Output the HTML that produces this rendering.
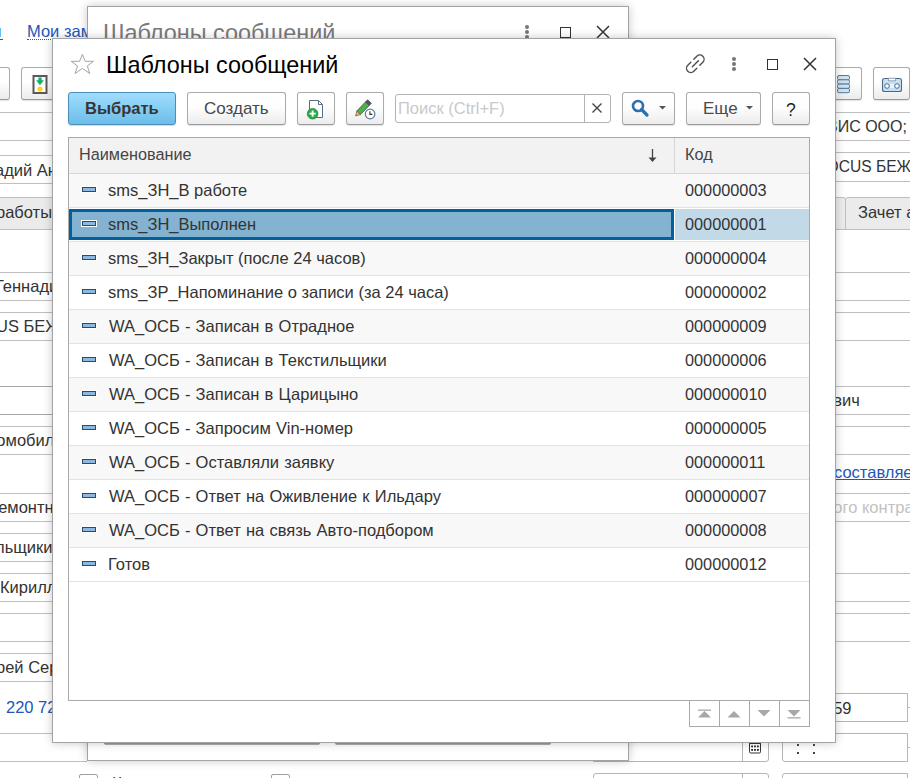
<!DOCTYPE html>
<html><head><meta charset="utf-8">
<style>
*{box-sizing:border-box;margin:0;padding:0}
html,body{width:910px;height:778px;overflow:hidden;background:#fff;font-family:"Liberation Sans",sans-serif;color:#333}
.a{position:absolute}
.hl{position:absolute;height:1px;background:#bfbfbf}
.t{position:absolute;white-space:nowrap;line-height:20px;font-size:16.25px;color:#333}
.btn{position:absolute;border:1px solid #ababab;border-bottom-color:#9a9a9a;border-radius:3px;background:linear-gradient(#fff 0%,#fefefe 45%,#ececec 100%);box-shadow:0 1px 1px rgba(0,0,0,.12)}
.dot{width:4px;height:4px;border-radius:50%;background:#777}
.bbl{border:1px solid #4b8cb8;border-radius:3px;background:linear-gradient(#a0ddfd,#6cbdea);box-shadow:0 1px 1px rgba(0,0,0,.15)}
.sel{border:3px solid #04609d;background:#84b3d1}
.r,.bg{font-size:16.5px}
.rs{background:#e3e3e3}
.ic{width:14px;height:5px;border:1px solid #234d74;background:#8cb9df;box-shadow:0 0 0 1px #fff}
.win{position:absolute;background:#fff;border:1px solid #a3a3a3;box-shadow:0 0 9px rgba(0,0,0,.22)}
</style></head><body>

<!-- ============ BACKGROUND FORM ============ -->
<div class="t" style="left:-17px;top:21px;font-size:16.5px;color:#2456b8">ии</div>
<div class="a" style="left:0px;top:39px;width:2px;border-top:1px dotted #2456b8"></div>
<div class="t" style="left:27px;top:21px;font-size:16.5px;color:#2456b8">Мои заметки</div>
<div class="a" style="left:27px;top:39px;width:60px;border-top:1px dotted #2456b8"></div>

<!-- toolbar buttons -->
<div class="btn" style="left:-30px;top:67px;width:40px;height:33px"></div>
<div class="btn" style="left:21px;top:67px;width:60px;height:33px"></div>
<div class="btn" style="left:800px;top:67px;width:62px;height:33px"></div>
<div class="btn" style="left:873px;top:67px;width:37px;height:33px"></div>
<svg class="a" style="left:32px;top:75px" width="16" height="19" viewBox="0 0 16 19"><rect x="1.5" y="1" width="13" height="17" fill="#fff" stroke="#595959" stroke-width="2"/><path d="M6.4 2.6 H9.6 V5.2 H11.9 L8 10.3 L4.1 5.2 H6.4 Z" fill="#12b060"/><circle cx="8" cy="14" r="2.6" fill="#ffd21f"/></svg>
<svg class="a" style="left:836px;top:74px" width="15" height="20" viewBox="0 0 15 20"><g fill="#cfe3f1" stroke="#557a98" stroke-width="1"><rect x="1.5" y="1.5" width="12" height="4.3" rx="1.5"/><rect x="1.5" y="5.8" width="12" height="4.3" rx="1.5"/><rect x="1.5" y="10.1" width="12" height="4.3" rx="1.5"/><rect x="1.5" y="14.4" width="12" height="4.3" rx="1.5"/></g></svg>
<svg class="a" style="left:881px;top:77px" width="22" height="16" viewBox="0 0 22 16"><rect x="1.5" y="1.5" width="19" height="13" rx="2" fill="#c6e0f3" stroke="#4d6b86" stroke-width="1.1"/><rect x="7.5" y="1.2" width="7" height="2.6" fill="#fff" stroke="#7f97ab" stroke-width="0.8"/><circle cx="6" cy="9" r="2.3" fill="#fff" stroke="#4d6b86" stroke-width="1"/><circle cx="16" cy="9" r="2.3" fill="#fff" stroke="#4d6b86" stroke-width="1"/><rect x="9" y="7" width="4" height="4" fill="#e8f2fa"/></svg>

<div class="hl" style="left:0;top:112px;width:910px"></div>

<!-- left fields -->
<div class="hl" style="left:0;top:140px;width:60px"></div>
<div class="hl" style="left:0;top:155px;width:60px"></div>
<div class="hl" style="left:0;top:183px;width:60px"></div>
<div class="t" style="left:-5px;top:160px;font-size:16.5px">адий Андреевич</div>
<div class="a" style="left:-20px;top:197px;width:80px;height:33px;background:#ebebeb;border:1px solid #bfbfbf"></div>
<div class="t" style="left:-4px;top:202px;font-size:16.5px">работы</div>

<div class="hl" style="left:0;top:272px;width:60px"></div>
<div class="hl" style="left:0;top:300px;width:60px"></div>
<div class="t bg" style="left:-5px;top:276px">Геннадий</div>
<div class="hl" style="left:0;top:312px;width:60px"></div>
<div class="hl" style="left:0;top:340px;width:60px"></div>
<div class="t bg" style="left:-4px;top:316px">US БЕЖ</div>

<div class="hl" style="left:0;top:386px;width:60px;background:#a8a8a8"></div>
<div class="hl" style="left:0;top:414px;width:60px;background:#a8a8a8"></div>
<div class="hl" style="left:0;top:426px;width:60px"></div>
<div class="hl" style="left:0;top:454px;width:60px"></div>
<div class="t bg" style="left:-11px;top:430px">томобиль</div>

<div class="hl" style="left:0;top:493px;width:60px"></div>
<div class="hl" style="left:0;top:521px;width:60px"></div>
<div class="t bg" style="left:-11px;top:497px">ремонтные</div>
<div class="hl" style="left:0;top:533px;width:60px"></div>
<div class="hl" style="left:0;top:561px;width:60px"></div>
<div class="t bg" style="left:-5px;top:537px">льщики</div>
<div class="hl" style="left:0;top:573px;width:60px"></div>
<div class="hl" style="left:0;top:601px;width:60px"></div>
<div class="t bg" style="left:0px;top:577px">Кирилл</div>
<div class="hl" style="left:0;top:613px;width:60px"></div>
<div class="hl" style="left:0;top:641px;width:60px"></div>
<div class="hl" style="left:0;top:653px;width:60px"></div>
<div class="hl" style="left:0;top:681px;width:60px"></div>
<div class="t bg" style="left:-4px;top:657px">рей Сер</div>
<div class="t bg" style="left:6px;top:697px;color:#2456b8">220 72</div>
<div class="hl" style="left:0;top:733px;width:60px"></div>
<div class="hl" style="left:0;top:761px;width:87px"></div>

<!-- right fields -->
<div class="t" style="left:827px;top:117px;font-size:16px">ВИС ООО;</div>
<div class="hl" style="left:820px;top:140px;width:90px"></div>
<div class="hl" style="left:820px;top:152px;width:90px"></div>
<div class="t" style="left:817px;top:157px;font-size:15.6px">FOCUS БЕЖ</div>
<div class="hl" style="left:820px;top:181px;width:90px"></div>
<div class="a" style="left:800px;top:197px;width:46px;height:33px;background:#ebebeb;border:1px solid #bfbfbf;border-radius:0 3px 0 0"></div>
<div class="a" style="left:845px;top:197px;width:80px;height:33px;background:#ebebeb;border:1px solid #bfbfbf;border-radius:3px 0 0 0"></div>
<div class="t bg" style="left:858px;top:202px">Зачет авансов</div>
<div class="hl" style="left:820px;top:272px;width:90px"></div>
<div class="hl" style="left:820px;top:300px;width:90px"></div>
<div class="hl" style="left:820px;top:312px;width:90px"></div>
<div class="hl" style="left:820px;top:340px;width:90px"></div>
<div class="hl" style="left:820px;top:386px;width:90px"></div>
<div class="hl" style="left:820px;top:414px;width:90px"></div>
<div class="t bg" style="left:824px;top:390px">евич</div>
<div class="hl" style="left:820px;top:426px;width:90px"></div>
<div class="hl" style="left:820px;top:454px;width:90px"></div>
<div class="t bg" style="left:834px;top:462px;color:#2456b8;text-decoration:underline">составляет</div>
<div class="hl" style="left:820px;top:493px;width:90px"></div>
<div class="t bg" style="left:826px;top:497px;color:#c2c2c2">того контрагента</div>
<div class="hl" style="left:820px;top:521px;width:90px"></div>
<div class="hl" style="left:820px;top:573px;width:90px"></div>
<div class="hl" style="left:820px;top:601px;width:90px"></div>
<div class="hl" style="left:820px;top:613px;width:90px"></div>
<div class="hl" style="left:820px;top:641px;width:90px"></div>
<div class="a" style="left:800px;top:693px;width:108px;height:29px;border:1px solid #b5b5b5"></div>
<div class="t bg" style="left:824px;top:698px">759</div>
<div class="hl" style="left:907px;top:707px;width:3px"></div>
<div class="a" style="left:782px;top:733px;width:126px;height:29px;border:1px solid #b5b5b5;border-radius:3px 0 0 3px"></div>
<div class="hl" style="left:907px;top:747px;width:3px"></div>
<div class="a" style="left:593px;top:733px;width:176px;height:29px;border:1px solid #b5b5b5;border-radius:0 3px 3px 0"></div>
<div class="a" style="left:742px;top:733px;width:1px;height:29px;background:#b5b5b5"></div>
<div class="a" style="left:593px;top:773px;width:176px;height:29px;border:1px solid #b5b5b5;border-radius:3px"></div>
<div class="a" style="left:742px;top:773px;width:1px;height:29px;background:#b5b5b5"></div>
<div class="a" style="left:782px;top:773px;width:126px;height:29px;border:1px solid #b5b5b5;border-radius:3px 0 0 0"></div>
<svg class="a" style="left:749px;top:741px" width="12" height="13" viewBox="0 0 12 13"><rect x="0.5" y="1" width="11" height="11" rx="1.2" fill="#fff" stroke="#333" stroke-width="1"/><rect x="0.5" y="0.5" width="11" height="2.5" fill="#333"/><g fill="#222"><rect x="2.2" y="4.5" width="1.8" height="1.8"/><rect x="5.1" y="4.5" width="1.8" height="1.8"/><rect x="8" y="4.5" width="1.8" height="1.8"/><rect x="2.2" y="8" width="1.8" height="1.8"/><rect x="5.1" y="8" width="1.8" height="1.8"/><rect x="8" y="8" width="1.8" height="1.8"/></g></svg>
<div class="a" style="left:797px;top:744px;width:2px;height:2px;background:#444"></div>
<div class="a" style="left:813px;top:744px;width:2px;height:2px;background:#444"></div>
<div class="a" style="left:797px;top:752px;width:2px;height:2px;background:#444"></div>
<div class="a" style="left:813px;top:752px;width:2px;height:2px;background:#444"></div>
<div class="a" style="left:79px;top:774px;width:19px;height:18px;border:1px solid #a0a0a0;border-radius:2px;background:#fff"></div>
<div class="a" style="left:271px;top:774px;width:19px;height:18px;border:1px solid #a0a0a0;border-radius:2px;background:#fff"></div>
<div class="t bg" style="left:112px;top:773px;color:#1f3f7a">Клиент</div>

<!-- ============ BACK WINDOW ============ -->
<div class="win" style="left:87px;top:6px;width:542px;height:755px">
  <div class="t" style="left:15px;top:13px;font-size:23.4px;line-height:26px;color:#7a7a7a">Шаблоны сообщений</div>
</div>
<div class="a dot" style="left:525px;top:25px"></div><div class="a dot" style="left:525px;top:30px"></div><div class="a dot" style="left:525px;top:35px"></div>
<div class="a" style="left:560px;top:27px;width:11px;height:11px;border:1.5px solid #333"></div>
<svg class="a" style="left:596px;top:25px" width="14" height="14" viewBox="0 0 14 14"><path d="M1 1 L13 13 M13 1 L1 13" stroke="#333" stroke-width="1.5"/></svg>

<div class="a" style="left:104px;top:743px;width:216px;height:2px;background:linear-gradient(#8c8c8c,#b8b8b8);border-radius:0 0 3px 3px"></div>
<div class="a" style="left:335px;top:743px;width:216px;height:2px;background:linear-gradient(#8c8c8c,#b8b8b8);border-radius:0 0 3px 3px"></div>
<!-- ============ FRONT DIALOG ============ -->
<div class="win" style="left:52px;top:38px;width:784px;height:705px"></div>
<div class="t" style="left:106px;top:52px;font-size:23.4px;line-height:26px;color:#000">Шаблоны сообщений</div>
<svg class="a" style="left:70px;top:53px" width="26" height="23" viewBox="0 0 26 23"><polygon points="12.4,1.4 15.2,8.3 23.6,8.3 17.3,13 19.7,20.5 12.4,15.4 5.1,20.5 7.5,13 1.2,8.3 9.6,8.3" fill="none" stroke="#9ea5ad" stroke-width="1" stroke-linejoin="miter"/></svg>
<!-- header icons -->
<svg class="a" style="left:685px;top:53px" width="22" height="22" viewBox="0.7 0.3 22 22"><g fill="none" stroke="#4f4f4f" stroke-width="1.4" stroke-linecap="round"><path d="M9.5 6.5 L12.5 3.5 A3.5 3.5 0 0 1 18.5 9.5 L15.5 12.5"/><path d="M12.5 15.5 L9.5 18.5 A3.5 3.5 0 0 1 3.5 12.5 L6.5 9.5"/><path d="M8 14 L14 8"/></g></svg>
<div class="a dot" style="left:732px;top:57px"></div><div class="a dot" style="left:732px;top:62px"></div><div class="a dot" style="left:732px;top:67px"></div>
<div class="a" style="left:767px;top:59px;width:11px;height:11px;border:1.5px solid #333"></div>
<svg class="a" style="left:803px;top:57px" width="14" height="14" viewBox="0 0 14 14"><path d="M1 1 L13 13 M13 1 L1 13" stroke="#333" stroke-width="1.5"/></svg>
<!-- toolbar -->
<div class="a bbl" style="left:68px;top:92px;width:108px;height:33px"></div>
<div class="t" style="left:85px;top:98px;font-weight:bold;font-size:16.5px;color:#363636">Выбрать</div>
<div class="btn" style="left:187px;top:92px;width:99px;height:33px"></div>
<div class="t" style="left:204px;top:99px;font-size:17px;color:#484848">Создать</div>
<div class="btn" style="left:297px;top:92px;width:38px;height:33px"></div>
<svg class="a" style="left:303px;top:97px" width="24" height="24" viewBox="0 0 24 24">
 <path d="M6.5 3.5 H15.5 L19.5 7.5 V20.5 H6.5 Z" fill="#fff" stroke="#5b6f86" stroke-width="1"/>
 <path d="M15.5 3.5 V7.5 H19.5" fill="none" stroke="#5b6f86" stroke-width="1"/>
 <circle cx="9.6" cy="16.7" r="5.3" fill="#2aa84a" stroke="#1e8a3a" stroke-width="0.8"/>
 <path d="M9.6 13.6 V19.8 M6.5 16.7 H12.7" stroke="#fff" stroke-width="1.8"/>
</svg>
<div class="btn" style="left:346px;top:92px;width:38px;height:33px"></div>
<svg class="a" style="left:352px;top:97px" width="26" height="24" viewBox="0 0 26 24">
 <path d="M8.53 17.61 L4.79 14.03 L13.56 4.87 L17.3 8.45 Z" fill="#4cb050" stroke="#3a4a3a" stroke-width="0.7"/>
 <path d="M13.56 4.87 L15.63 2.71 L19.37 6.29 L17.3 8.45 Z" fill="#4d5761" stroke="#3a3f45" stroke-width="0.6"/>
 <path d="M8.53 17.61 L4.79 14.03 L3.6 19 Z" fill="#e3b46e" stroke="#5a4a30" stroke-width="0.6"/>
 <circle cx="18.1" cy="17" r="4.8" fill="#fff" stroke="#5a80a5" stroke-width="1.2"/>
 <path d="M17.9 14.2 V17.4 H20.4" fill="none" stroke="#333" stroke-width="1.1"/>
</svg>
<div class="a" style="left:395px;top:94px;width:216px;height:29px;border:1px solid #b3b3b3;border-radius:3px;background:#fff"></div>
<div class="a" style="left:584px;top:95px;width:1px;height:27px;background:#b3b3b3"></div>
<div class="t" style="left:398px;top:98px;font-size:16.5px;color:#c9c9c9">Поиск (Ctrl+F)</div>
<svg class="a" style="left:591px;top:102px" width="12" height="12" viewBox="0 0 12 12"><path d="M1.5 1.5 L10.5 10.5 M10.5 1.5 L1.5 10.5" stroke="#444" stroke-width="1.4"/></svg>
<div class="btn" style="left:622px;top:92px;width:53px;height:33px"></div>
<svg class="a" style="left:631px;top:99px" width="19" height="19" viewBox="0 0 19 19"><circle cx="7" cy="7" r="5" fill="none" stroke="#2e6fae" stroke-width="2.6"/><path d="M10.5 10.5 L16 16" stroke="#2e6fae" stroke-width="3.2" stroke-linecap="round"/></svg>
<svg class="a" style="left:659px;top:106px" width="7" height="4" viewBox="0 0 7 4"><path d="M0 0 H7 L3.5 3.5 Z" fill="#555"/></svg>
<div class="btn" style="left:686px;top:92px;width:75px;height:33px"></div>
<div class="t" style="left:703px;top:99px;font-size:17px;color:#4a4a4a">Еще</div>
<svg class="a" style="left:746px;top:106px" width="7" height="4" viewBox="0 0 7 4"><path d="M0 0 H7 L3.5 3.5 Z" fill="#555"/></svg>
<div class="btn" style="left:772px;top:92px;width:38px;height:33px"></div>
<div class="t" style="left:786px;top:100px;font-size:17.5px;color:#1e1e1e">?</div>
<!-- table -->
<div class="a" style="left:68px;top:137px;width:742px;height:564px;border:1px solid #a9a9a9;background:#fff"></div>
<div class="a" style="left:69px;top:138px;width:740px;height:35px;background:#f2f2f2"></div>
<div class="hl" style="left:69px;top:173px;width:740px;background:#d6d6d6"></div>
<div class="a" style="left:674px;top:138px;width:1px;height:35px;background:#d6d6d6"></div>
<div class="t" style="left:79px;top:144px;color:#444">Наименование</div>
<div class="t" style="left:685px;top:144px;color:#444">Код</div>
<svg class="a" style="left:647px;top:148px" width="11" height="15" viewBox="0 0 11 15"><path d="M5.5 1 V11" stroke="#444" stroke-width="1.3"/><path d="M1.5 9.5 H9.5 L5.5 14 Z" fill="#444"/></svg>
<div class="a" style="left:69px;top:174px;width:740px;height:33px;background:#f8f8f8"></div>
<div class="hl rs" style="left:69px;top:207px;width:740px"></div>
<div class="a ic" style="left:82px;top:187px"></div>
<div class="t r" style="left:108px;top:180px">sms_ЗН_В работе</div>
<div class="t" style="left:685px;top:180px;font-size:16.3px">000000003</div>
<div class="a" style="left:69px;top:208px;width:740px;height:33px;background:#fff"></div>
<div class="a sel" style="left:69px;top:209px;width:605px;height:31px"></div>
<div class="a" style="left:675px;top:209px;width:134px;height:31px;background:#c2d9e8"></div>
<div class="hl rs" style="left:69px;top:241px;width:740px"></div>
<div class="a ic" style="left:82px;top:221px"></div>
<div class="t r" style="left:108px;top:214px">sms_ЗН_Выполнен</div>
<div class="t" style="left:685px;top:214px;font-size:16.3px">000000001</div>
<div class="a" style="left:69px;top:242px;width:740px;height:33px;background:#f8f8f8"></div>
<div class="hl rs" style="left:69px;top:275px;width:740px"></div>
<div class="a ic" style="left:82px;top:255px"></div>
<div class="t r" style="left:108px;top:248px">sms_ЗН_Закрыт (после 24 часов)</div>
<div class="t" style="left:685px;top:248px;font-size:16.3px">000000004</div>
<div class="a" style="left:69px;top:276px;width:740px;height:33px;background:#fff"></div>
<div class="hl rs" style="left:69px;top:309px;width:740px"></div>
<div class="a ic" style="left:82px;top:289px"></div>
<div class="t r" style="left:108px;top:282px">sms_ЗР_Напоминание о записи (за 24 часа)</div>
<div class="t" style="left:685px;top:282px;font-size:16.3px">000000002</div>
<div class="a" style="left:69px;top:310px;width:740px;height:33px;background:#f8f8f8"></div>
<div class="hl rs" style="left:69px;top:343px;width:740px"></div>
<div class="a ic" style="left:82px;top:323px"></div>
<div class="t r" style="left:109px;top:316px;word-spacing:0.6px">WA_ОСБ - Записан в Отрадное</div>
<div class="t" style="left:685px;top:316px;font-size:16.3px">000000009</div>
<div class="a" style="left:69px;top:344px;width:740px;height:33px;background:#fff"></div>
<div class="hl rs" style="left:69px;top:377px;width:740px"></div>
<div class="a ic" style="left:82px;top:357px"></div>
<div class="t r" style="left:109px;top:350px;word-spacing:0.6px">WA_ОСБ - Записан в Текстильщики</div>
<div class="t" style="left:685px;top:350px;font-size:16.3px">000000006</div>
<div class="a" style="left:69px;top:378px;width:740px;height:33px;background:#f8f8f8"></div>
<div class="hl rs" style="left:69px;top:411px;width:740px"></div>
<div class="a ic" style="left:82px;top:391px"></div>
<div class="t r" style="left:109px;top:384px;word-spacing:0.6px">WA_ОСБ - Записан в Царицыно</div>
<div class="t" style="left:685px;top:384px;font-size:16.3px">000000010</div>
<div class="a" style="left:69px;top:412px;width:740px;height:33px;background:#fff"></div>
<div class="hl rs" style="left:69px;top:445px;width:740px"></div>
<div class="a ic" style="left:82px;top:425px"></div>
<div class="t r" style="left:109px;top:418px;word-spacing:0.6px">WA_ОСБ - Запросим Vin-номер</div>
<div class="t" style="left:685px;top:418px;font-size:16.3px">000000005</div>
<div class="a" style="left:69px;top:446px;width:740px;height:33px;background:#f8f8f8"></div>
<div class="hl rs" style="left:69px;top:479px;width:740px"></div>
<div class="a ic" style="left:82px;top:459px"></div>
<div class="t r" style="left:109px;top:452px;word-spacing:0.6px">WA_ОСБ - Оставляли заявку</div>
<div class="t" style="left:685px;top:452px;font-size:16.3px">000000011</div>
<div class="a" style="left:69px;top:480px;width:740px;height:33px;background:#fff"></div>
<div class="hl rs" style="left:69px;top:513px;width:740px"></div>
<div class="a ic" style="left:82px;top:493px"></div>
<div class="t r" style="left:109px;top:486px;word-spacing:0.6px">WA_ОСБ - Ответ на Оживление к Ильдару</div>
<div class="t" style="left:685px;top:486px;font-size:16.3px">000000007</div>
<div class="a" style="left:69px;top:514px;width:740px;height:33px;background:#f8f8f8"></div>
<div class="hl rs" style="left:69px;top:547px;width:740px"></div>
<div class="a ic" style="left:82px;top:527px"></div>
<div class="t r" style="left:109px;top:520px;word-spacing:0.6px">WA_ОСБ - Ответ на связь Авто-подбором</div>
<div class="t" style="left:685px;top:520px;font-size:16.3px">000000008</div>
<div class="a" style="left:69px;top:548px;width:740px;height:33px;background:#fff"></div>
<div class="hl rs" style="left:69px;top:581px;width:740px"></div>
<div class="a ic" style="left:82px;top:561px"></div>
<div class="t r" style="left:108px;top:554px">Готов</div>
<div class="t" style="left:685px;top:554px;font-size:16.3px">000000012</div>
<!-- pager -->
<div class="a" style="left:689px;top:700px;width:121px;height:27px;border:1px solid #a9a9a9;background:#fff"></div>
<div class="a" style="left:719px;top:700px;width:1px;height:27px;background:#a9a9a9"></div>
<div class="a" style="left:749px;top:700px;width:1px;height:27px;background:#a9a9a9"></div>
<div class="a" style="left:779px;top:700px;width:1px;height:27px;background:#a9a9a9"></div>
<svg class="a" style="left:689px;top:700px" width="121" height="27" viewBox="0 0 121 27" fill="#a8a8a8">
 <rect x="9" y="9.5" width="13" height="1.3"/><path d="M9 17.5 H22 L15.5 11 Z"/>
 <path d="M38.5 17.5 H51.5 L45 11 Z"/>
 <path d="M68.5 10 H81.5 L75 16.5 Z"/>
 <path d="M98.5 10 H111.5 L105 16.5 Z"/><rect x="98.5" y="17.2" width="13" height="1.3"/>
</svg>
</body></html>
